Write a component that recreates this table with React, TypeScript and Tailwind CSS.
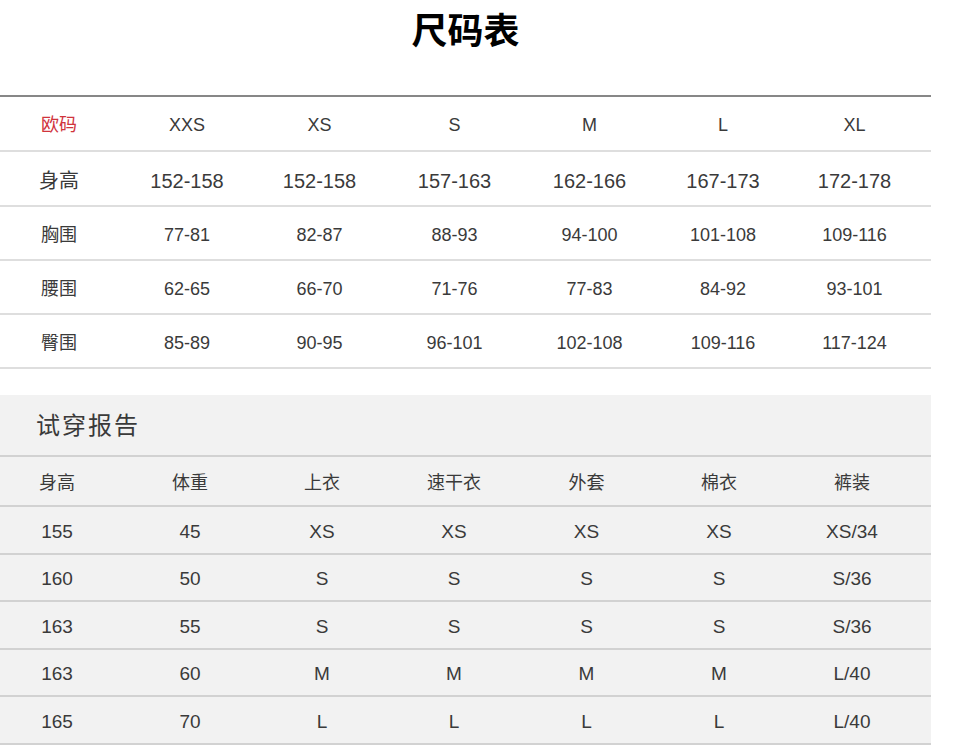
import React from "react";

const topCols = "grid grid-cols-[122px_130px_135px_135px_135px_132px_1fr] items-center pt-[4px]";
const botCols = "grid grid-cols-[124px_132px_132px_132px_133px_132px_1fr] items-center pt-[4px]";

const sizes = ["XXS", "XS", "S", "M", "L", "XL"];
const topRows: { label: string; big?: boolean; vals: string[] }[] = [
  { label: "身高", big: true, vals: ["152-158", "152-158", "157-163", "162-166", "167-173", "172-178"] },
  { label: "胸围", vals: ["77-81", "82-87", "88-93", "94-100", "101-108", "109-116"] },
  { label: "腰围", vals: ["62-65", "66-70", "71-76", "77-83", "84-92", "93-101"] },
  { label: "臀围", vals: ["85-89", "90-95", "96-101", "102-108", "109-116", "117-124"] },
];

const botHead = ["身高", "体重", "上衣", "速干衣", "外套", "棉衣", "裤装"];
const botRows = [
  ["155", "45", "XS", "XS", "XS", "XS", "XS/34"],
  ["160", "50", "S", "S", "S", "S", "S/36"],
  ["163", "55", "S", "S", "S", "S", "S/36"],
  ["163", "60", "M", "M", "M", "M", "L/40"],
  ["165", "70", "L", "L", "L", "L", "L/40"],
];

function cellCls(i: number, last: number, first: string, lastCls: string) {
  if (i === 0) return `text-center ${first}`;
  if (i === last) return `text-center ${lastCls}`;
  return "text-center";
}

export default function App() {
  return (
    <div
      className="w-[955px] min-h-[755px] bg-white text-[#3a3a3a]"
      style={{ fontFamily: '"Liberation Sans", "Noto Sans CJK SC", sans-serif' }}
    >
      <div className="h-[95px] pt-[12px]">
        <h1 className="w-[931px] text-center text-[36px] leading-[40px] font-bold text-black">尺码表</h1>
      </div>

      <div className="w-[931px]">
        <div className={`${topCols} h-[57px] border-t-2 border-b-2 border-t-[#878787] border-b-[#dedede] text-[18px]`}>
          <div className="text-center pr-1 text-[#d0343c]">欧码</div>
          {sizes.map((s, i) => (
            <div key={s} className={i === 5 ? "text-center pr-[11px]" : "text-center"}>
              {s}
            </div>
          ))}
        </div>
        {topRows.map((r) => (
          <div
            key={r.label}
            className={`${topCols} ${r.big ? "h-[55px] text-[20px]" : "h-[54px] text-[18px]"} border-b-2 border-[#dedede]`}
          >
            <div className="text-center pr-1">{r.label}</div>
            {r.vals.map((v, i) => (
              <div key={i} className={i === 5 ? "text-center pr-[11px]" : "text-center"}>
                {v}
              </div>
            ))}
          </div>
        ))}
      </div>

      <div className="h-[26px]" />

      <div className="w-[931px] bg-[#f2f2f2]">
        <div className="h-[60px] flex items-center pl-[36px] pt-[2px] text-[24px] tracking-[2px] text-[#3a3a3a]">试穿报告</div>
        <div className={`${botCols} h-[52px] border-t-2 border-b-2 border-[#d2d2d2] text-[18px]`}>
          {botHead.map((h, i) => (
            <div key={h} className={cellCls(i, 6, "pr-[10px]", "pr-3")}>
              {h}
            </div>
          ))}
        </div>
        {botRows.map((r, ri) => (
          <div key={ri} className={`${botCols} h-[47.5px] border-b-2 border-[#d2d2d2] text-[19px]`}>
            {r.map((v, i) => (
              <div key={i} className={cellCls(i, 6, "pr-[10px]", "pr-3")}>
                {v}
              </div>
            ))}
          </div>
        ))}
      </div>
    </div>
  );
}
